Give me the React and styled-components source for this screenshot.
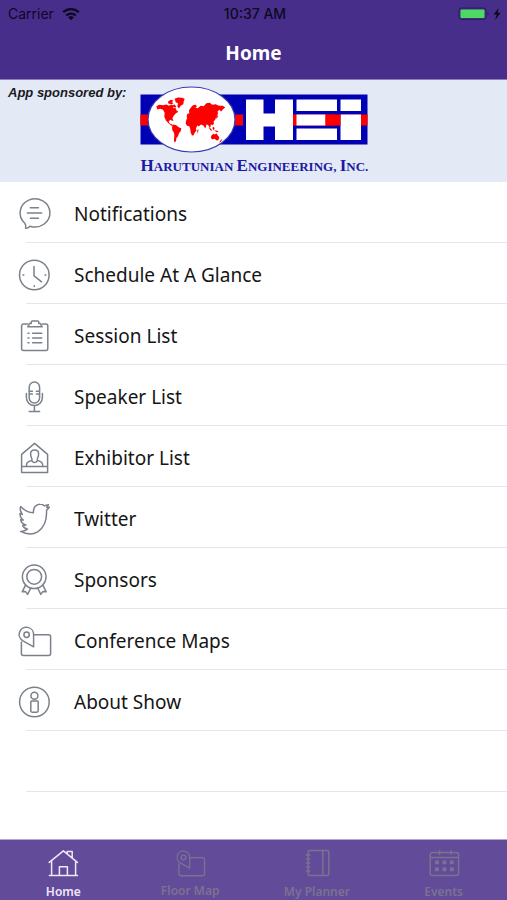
import styled, { createGlobalStyle } from "styled-components";

const GlobalStyle = createGlobalStyle`
    * {
        box-sizing: border-box;
    }
    body {
        margin: 0;
        background-color: #ffffff;
        font-family: "Noto Sans", "Open Sans", sans-serif;
    }
`

const Page = styled.div`
    display: flex;
    flex-direction: column;
    min-height: 100vh;
`

const Header = styled.header`
    background-color: #472e8b;
    border-bottom: 1px solid #8d7db8;
`

const StatusBar = styled.div`
    display: grid;
    grid-template-columns: 1fr auto 1fr;
    align-items: center;
    height: 27px;
    padding: 0 5px 0 8px;
    color: #0e0820;
    font-family: Inter, sans-serif;
    font-size: 14px;
`

const StatusGroup = styled.div`
    display: flex;
    align-items: center;
    justify-content: ${(props) => props.$end ? 'flex-end' : 'flex-start'};
    gap: 8px;
`

const Clock = styled.time`
    font-weight: 500;
`

const Title = styled.h1`
    margin: 0;
    color: #ffffff;
    font-size: 19px;
    font-weight: 700;
    line-height: 52px;
    text-align: center;
`

const Banner = styled.section`
    display: flex;
    gap: 14px;
    height: 102px;
    padding: 6px 8px 0;
    background-color: #e4eaf5;
`

const BannerLabel = styled.p`
    margin: 0;
    color: #1a1a24;
    font-family: "Liberation Sans", Arial, sans-serif;
    font-size: 13px;
    font-style: italic;
    font-weight: 700;
    line-height: 14px;
    white-space: nowrap;
`

const Sponsor = styled.figure`
    display: flex;
    flex-direction: column;
    align-items: center;
    margin: 0;
`

const SponsorName = styled.figcaption`
    color: #1d17a6;
    font-family: "Liberation Serif", "Times New Roman", serif;
    font-size: 13px;
    font-weight: 700;
    line-height: 24px;
    text-transform: uppercase;
    white-space: nowrap;
`

const Cap = styled.span`
    font-size: 17px;
`

const LogoSvg = styled.svg`
    flex: none;
    width: 228px;
    height: 68px;
`

const Menu = styled.ul`
    flex: 1;
    margin: 0;
    padding: 0 0 0 26px;
    list-style: none;
`

const MenuItem = styled.li`
    height: 61px;
    border-bottom: 1px solid #e6e6e9;
`

const MenuLink = styled.a`
    display: flex;
    align-items: center;
    gap: 24px;
    height: 100%;
    margin-left: -8px;
    padding-top: 3px;
    color: #151515;
    font-size: 19px;
    text-decoration: none;
`

const TabBar = styled.nav`
    display: flex;
    height: 61px;
    background-color: #624c99;
    border-top: 1px solid #b3a8d0;
`

const Tab = styled.a`
    display: flex;
    flex: 1;
    flex-direction: column;
    align-items: center;
    gap: 4px;
    padding-top: 7px;
    color: ${(props) => props.$active ? '#f0e6fb' : '#7b7191'};
    font-size: 12px;
    font-weight: 600;
    line-height: 18px;
    text-decoration: none;
`

const TabIcon = styled.span`
    display: flex;
    align-items: center;
    height: 32px;
`

const IconSvg = styled.svg`
    flex: none;
    width: ${(props) => `${props.$size}px`};
    height: ${(props) => `${props.$size}px`};
    overflow: visible;
    fill: none;
    stroke: ${(props) => props.$color};
    stroke-width: 1.5;
    stroke-linecap: round;
    stroke-linejoin: round;
`

const icons = {
    notifications: (
        <path d="M12 28.2A14.9 14.1 0 1 0 6.8 25.2c1.2 1.5 1.3 3.2.8 5 2 .1 3.6-.6 4.4-2zM12.4 9.8h8M9.4 15h14.2M12.4 20.2h8" />
    ),
    schedule: (
        <>
            <circle cx="16.3" cy="16" r="14.8" />
            <path d="M16 7.4v9.4l7.6 6M5 16h.8M27 16h.8M16.3 26.8v.8" />
        </>
    ),
    session: (
        <>
            <path d="M9.5 4H5.6A2 2 0 0 0 3.6 6v22.4a2 2 0 0 0 2 2h22.2a2 2 0 0 0 2-2V6a2 2 0 0 0-2-2h-3.6" />
            <path d="M9.8 6.8h14.4l-2-3.4h-1.4V2.2a1.2 1.2 0 0 0-1.2-1.2h-5.2a1.2 1.2 0 0 0-1.2 1.2v1.2h-1.6zM14.6 13.2h9.2M14.6 18h9.2M14.6 22.8h9.2M10 13.2h1M10 18h1M10 22.8h1" />
        </>
    ),
    speaker: (
        <>
            <rect x="11.2" y="1" width="10.4" height="21" rx="5.2" />
            <path d="M8.4 12.6v4a8 8 0 0 0 16 0v-4M16.4 24.6v5.6M11.2 30.4h10.4M11.4 10.2h3M18.4 10.2h3M11.4 13h3M18.4 13h3" />
        </>
    ),
    exhibitor: (
        <>
            <path d="M3.6 30.6V12.4L16.6 1.4l13 11v18.2zM3.6 24.6h26" />
            <path d="M8.4 24.2c0-3.8 1.6-4.6 5.4-5.8.4-.8.2-1.6-.2-2.4-.8-1.2-1-2.6-1-4.2 0-5 8-5 8 0 0 1.6-.2 3-1 4.2-.4.8-.6 1.6-.2 2.4 3.8 1.2 5.4 2 5.4 5.8" />
            <path d="M14 19.2c1.2 1.8 4 1.8 5.2 0" />
        </>
    ),
    twitter: (
        <path d="M2.7 3.5C6 7.2 10 9.5 15.4 9.8c-.2-5.2 2.4-8.6 6.8-8.5 1.8 0 3.1.5 4.3 1.5l4-1.1-1.7 2.8 2.5-.2-2.8 3.3C29 17 26 24.6 20 28.6c-5.4 3.3-11.8 2.8-17.4-.2 2.4.2 4.8-.6 6.9-2.2-2.4-.6-4-1.8-4.8-3.8l3.2-.4c-3-1-4.8-2.8-5.2-5.2l2.6.3C2.8 15.4 2 13.2 2 10.6l2.3.8C2.2 8.8 1.8 6.2 2.7 3.5z" />
    ),
    sponsors: (
        <>
            <circle cx="16.2" cy="12.8" r="11.8" />
            <circle cx="16.2" cy="12.8" r="7.4" />
            <path d="M7.4 21.4l-3.2 6.4 3.4-.2 2 2.8 3.2-6.4M25 21.4l3.2 6.4-3.4-.2-2 2.8-3.2-6.4" />
        </>
    ),
    maps: (
        <>
            <path d="M3.4 17v11.6a2 2 0 0 0 2 2h25.2a2 2 0 0 0 2-2V11.8a2 2 0 0 0-2-2H16" />
            <path d="M15.6 21.8V9.6A7.2 7.2 0 1 0 5 15.8z" />
            <circle cx="8.6" cy="9.8" r="2.7" />
        </>
    ),
    about: (
        <>
            <circle cx="16.4" cy="16" r="14.8" />
            <circle cx="16.4" cy="9.8" r="3.5" />
            <path d="M13.6 15h5.8a.8.8 0 0 1 .8.8v9a1.4 1.4 0 0 1-1.4 1.4h-4.6a1.4 1.4 0 0 1-1.4-1.4v-9a.8.8 0 0 1 .8-.8z" />
        </>
    ),
    home: (
        <path d="M2.2 15.4L16.4 3.8l14 11.6M20.2 6.4V4.4h5v6.4M4.6 13.8v14.4M28.6 13.8v14.4M2.4 28.4h28M12.4 28.2v-8.4h8v8.4" />
    ),
    planner: (
        <path d="M8.6 3.4h17.2a2 2 0 0 1 2 2v21.2a2 2 0 0 1-2 2H8.6a1.4 1.4 0 0 1-1.4-1.4V4.8a1.4 1.4 0 0 1 1.4-1.4zM21.8 3.4v25.2M5.4 8h3.4M5.4 12h3.4M5.4 16h3.4M5.4 20h3.4M5.4 24h3.4" />
    ),
    events: (
        <>
            <path d="M4.2 5.6h24.4a2 2 0 0 1 2 2v19a2 2 0 0 1-2 2H4.2a2 2 0 0 1-2-2v-19a2 2 0 0 1 2-2zM2.2 10.4h28.4M11.6 3.8v3.4M22.8 3.8v3.4" />
            <path d="M7.8 14.2h2.4v2.4H7.8zM15.2 14.2h2.4v2.4h-2.4zM22.6 14.2H25v2.4h-2.4zM7.8 21h2.4v2.4H7.8zM15.2 21h2.4v2.4h-2.4zM22.6 21H25v2.4h-2.4z" fill="currentColor" />
        </>
    ),
}

const Icon = ({name, color, size = 32}) => (
    <IconSvg viewBox="0 0 32 32" $color={color} $size={size} aria-hidden="true">{icons[name]}</IconSvg>
)

const WifiIcon = () => (
    <svg width="18" height="14" viewBox="0 0 18 14" fill="none" stroke="#0e0820" strokeWidth="2.4" aria-hidden="true">
        <path d="M1.2 5.2a11.4 11.4 0 0 1 15.6 0M4.2 8.5a7 7 0 0 1 9.6 0" />
        <path d="M9 13.2L6.2 10.4a4 4 0 0 1 5.6 0z" fill="#0e0820" stroke="none" />
    </svg>
)

const BatteryIcon = () => (
    <svg width="44" height="14" viewBox="0 0 44 14" aria-hidden="true">
        <rect x="1" y="1" width="27" height="11.4" rx="2.6" fill="none" stroke="#2b1b58" />
        <rect x="2.5" y="2.5" width="24" height="8.6" rx="1" fill="#4cd964" />
        <path d="M29.5 5c1.6.6 1.6 3 0 3.6z" fill="#2b1b58" />
        <path d="M40.6 1L35.6 7.6h3L37.2 13l5.4-7.2h-3z" fill="#0e0820" />
    </svg>
)

const SponsorLogo = () => (
    <LogoSvg viewBox="0 0 228 68" aria-hidden="true">
        <rect x="0.5" y="8.5" width="227" height="50" fill="#0000b4" />
        <rect x="0.5" y="28.5" width="227" height="11" fill="#fe0000" />
        <g fill="#0000b4">
            <rect x="103" y="13" width="13" height="42" />
            <rect x="195" y="13" width="6" height="42" />
        </g>
        <g fill="#ffffff">
            <path d="M106 13.5h17.5v14H135v-14h18V54h-18V40.5h-11.5V54H106z" />
            <path d="M156.5 13.5H197V25h-40.5zM156.5 28.5h29v11h-29zM156.5 42.5H197V54h-40.5z" />
            <path d="M200.5 13.5H221V25h-20.5zM200.5 28.5H221V54h-20.5z" />
        </g>
        <rect x="185.5" y="28.5" width="15" height="11" fill="#fe0000" />
        <ellipse cx="51.5" cy="33.5" rx="43.5" ry="32.5" fill="#ffffff" stroke="#3a3ab4" strokeWidth="1.2" />
        <g fill="#fe0000" transform="translate(0 -1.5) scale(.3333)">
            <path d="M49 66l8-5 12 1 10-2 8 4 8-4 7 5-3 6 7-1 4 8 5 4-8 5-7 8-3 8 4 5-5 1-5-3-5 5 3 6 8 3 4 5-6-1-9-7-8-9-5-11 1-12-5-9-8-3-9 2z" />
            <path d="M104 43l10-4 12 1 8 3-3 8-1 8-8 5-5 8-5-7 2-9-7-3zM84 52l8-6 8 2-4 5 5 4-8 2-8-2zM97 62l7-2 5 7-4 3z" />
            <path d="M100 120l9 2 7 6 8 3-2 9-5 6-3 9-5 6-1 9-5 4-1-8 1-12-1-9-5-8-1-9z" />
            <path d="M139 105l8-5 9 2 9 1 5 10 6 2-4 9-4 7 1 8-5 6-3 7-5 1-4-9-1-10-3-9-7-1-4-7zM172 137l3-4 0 9-3 5z" />
            <path d="M140 96l2-8 6-2-1-7 5-9 7-8 8-1 4 5-5 4 7 1 9-7 9 1 8-9 10-1 8 6 10-2 10 5 11 0 8 5-7 5-6 8-4-6-6 4 1 8-5 9-3 8-5 6 1 7-5 4-4-2-3 11-5-9-5-3-4 13-6-9-7-3-7 6-6-6-2-7-8-1-5-5-6 3-5 3z" />
            <path d="M228 98l4-7 2 5-4 7zM147 80l2-6 2 5zM206 128l7 5 4 6-6-2zM217 130l5-3 2 6-4 4zM223 137l6 1 8 4-7 1z" />
            <path d="M214 153l7-5 4 2 4-4 4 6 5 6-3 9-5 1-6-5-8 2-3-5zM243 166l4-2-4 8-6 3z" />
        </g>
    </LogoSvg>
)

const menuItems = [
    {icon: 'notifications', text: 'Notifications'},
    {icon: 'schedule', text: 'Schedule At A Glance'},
    {icon: 'session', text: 'Session List'},
    {icon: 'speaker', text: 'Speaker List'},
    {icon: 'exhibitor', text: 'Exhibitor List'},
    {icon: 'twitter', text: 'Twitter'},
    {icon: 'sponsors', text: 'Sponsors'},
    {icon: 'maps', text: 'Conference Maps'},
    {icon: 'about', text: 'About Show'},
]

const tabs = [
    {icon: 'home', text: 'Home', active: true},
    {icon: 'maps', text: 'Floor Map', size: 28},
    {icon: 'planner', text: 'My Planner'},
    {icon: 'events', text: 'Events'},
]

const App = () => {
    return(
        <Page>
            <GlobalStyle />
            <Header>
                <StatusBar>
                    <StatusGroup>Carrier<WifiIcon /></StatusGroup>
                    <Clock>10:37 AM</Clock>
                    <StatusGroup $end><BatteryIcon /></StatusGroup>
                </StatusBar>
                <Title>Home</Title>
            </Header>
            <Banner>
                <BannerLabel>App sponsored by:</BannerLabel>
                <Sponsor>
                    <SponsorLogo />
                    <SponsorName><Cap>H</Cap>arutunian <Cap>E</Cap>ngineering, <Cap>I</Cap>nc.</SponsorName>
                </Sponsor>
            </Banner>
            <Menu>
                {menuItems.map(item => (
                    <MenuItem key={item.icon}>
                        <MenuLink href={`#${item.icon}`}><Icon name={item.icon} color="#7b808a" />{item.text}</MenuLink>
                    </MenuItem>
                ))}
                <MenuItem />
            </Menu>
            <TabBar>
                {tabs.map(tab => (
                    <Tab key={tab.icon} href={`#tab-${tab.icon}`} $active={tab.active}>
                        <TabIcon><Icon name={tab.icon} color="currentColor" size={tab.size} /></TabIcon>
                        {tab.text}
                    </Tab>
                ))}
            </TabBar>
        </Page>
    );
}

export default App;
